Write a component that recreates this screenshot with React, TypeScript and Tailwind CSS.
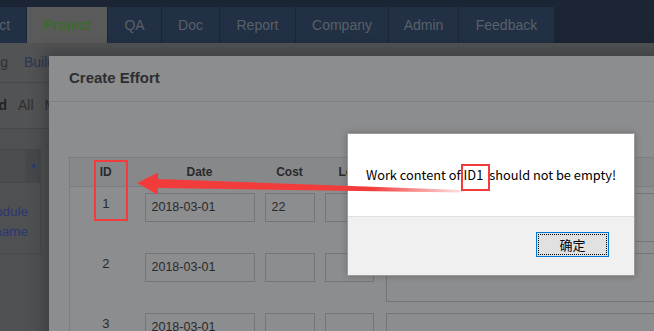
import React from 'react';

const tabs = [
  { name: 'Product', w: 'w-[80px] -ml-[54px]' },
  { name: 'Project', w: 'w-[80px]', active: true },
  { name: 'QA', w: 'w-[53px]' },
  { name: 'Doc', w: 'w-[57px]' },
  { name: 'Report', w: 'w-[75px]' },
  { name: 'Company', w: 'w-[92px]' },
  { name: 'Admin', w: 'w-[69px]' },
  { name: 'Feedback', w: 'w-[95px]' },
];

const rows = [
  { id: 1, date: '2018-03-01', cost: '22' },
  { id: 2, date: '2018-03-01', cost: '' },
  { id: 3, date: '2018-03-01', cost: '' },
];

// clips text from the left so only its tail shows
function Tail({ w, children, className }: { w: string; children: React.ReactNode; className?: string }) {
  return (
    <div className={`flex justify-end overflow-hidden ${w}`}>
      <span className={`shrink-0 whitespace-nowrap ${className ?? ''}`}>{children}</span>
    </div>
  );
}

export default function App() {
  return (
    <div className="relative h-[331px] w-[654px] overflow-hidden bg-[#4f5052] font-['Liberation_Sans',Arial,sans-serif]">
      {/* top nav */}
      <nav className="flex h-[43px] items-end bg-[#1c2533]">
        <div className="flex h-[36px] gap-px">
          {tabs.map(t => (
            <div
              key={t.name}
              className={`flex shrink-0 items-center justify-center text-[14px] ${t.w} ${
                t.active ? 'bg-[#5a5a5a] font-bold text-[#3d6a2e]' : 'bg-[#213044] text-[#596069]'
              }`}
            >
              {t.name}
            </div>
          ))}
        </div>
      </nav>

      {/* page under the dialogs */}
      <div className="bg-[#525355]">
        <div className="flex h-[40px] items-center gap-4 border-b border-[#47484a] text-[14px]">
          <Tail w="w-[8px]" className="text-[#2f3032]">Testing</Tail>
          <span className="text-[#2d3750]">Build</span>
        </div>
        <div className="flex h-[46px] items-center gap-[11px] border-b border-[#47484a] text-[14px]">
          <Tail w="w-[7px]" className="font-bold text-[#222324]">Assigned</Tail>
          <span className="text-[#2f3032]">All</span>
          <span className="text-[#2f3032]">More</span>
        </div>
      </div>
      <div className="pt-[20px]">
        <div className="w-[41px] border-r border-[#47484a]">
          <div className="flex h-[34px] border-y border-[#47484a] bg-[#4c4d4f]">
            <div className="flex-1" />
            <div className="flex w-[15px] items-center justify-center bg-[#47484b]">
              <svg width="4" height="6" viewBox="0 0 4 6">
                <path d="M4 0 L0 3 L4 6 Z" fill="#2b3878" />
              </svg>
            </div>
          </div>
          <div className="flex h-[71px] flex-col border-b border-[#47484a] bg-[#4f5052] pt-[19px] text-[13.5px] leading-[20px] text-[#2b3773]">
            <Tail w="w-[28px]">Module</Tail>
            <Tail w="w-[28px]">Username</Tail>
          </div>
        </div>
      </div>

      {/* Create Effort modal */}
      <div className="absolute left-[49px] top-[56px] h-[320px] w-[760px] bg-[#8c8d8f] shadow-[0_0_14px_6px_rgba(0,0,0,0.22)]">
        <div className="flex h-[46px] items-center border-b border-[#7f8082] px-5">
          <h2 className="text-[15px] font-bold text-[#2d2e2f]">Create Effort</h2>
        </div>
        <div className="pl-5 pt-[55px]">
          <table className="w-[710px] table-fixed border-collapse border-l border-t border-[#7c7d7f] text-[#2a2a2b]">
            <thead>
              <tr className="h-[29px] border-b border-[#7c7d7f] bg-[#87888a] text-[12px] font-bold">
                <th className="w-[70px] pl-[2px] text-center">ID</th>
                <th className="w-[120px] text-center">Date</th>
                <th className="w-[60px] text-center">Cost</th>
                <th className="w-[60px] text-center">Left</th>
                <th className="w-[400px] text-center">Work content</th>
              </tr>
            </thead>
            <tbody>
              {rows.map(r => (
                <tr key={r.id} className="h-[60px] align-top">
                  <td className="pl-[2px] pt-[9px] text-center text-[13px] leading-[15px]">{r.id}</td>
                  <td className="px-[5px] pt-[6px]">
                    <div className="flex h-[29px] items-center border border-[#747577] pl-[6px] text-[12.5px]">{r.date}</div>
                  </td>
                  <td className="px-[5px] pt-[6px]">
                    <div className="flex h-[29px] items-center border border-[#747577] pl-[6px] text-[12.5px]">{r.cost}</div>
                  </td>
                  <td className="pl-[5px] pr-[6px] pt-[6px]">
                    <div className="h-[29px] border border-[#747577]" />
                  </td>
                  <td className="pl-[6px] pt-[6px]">
                    <div className="h-[49px] border border-[#747577]" />
                  </td>
                </tr>
              ))}
            </tbody>
          </table>
        </div>
      </div>

      {/* browser alert */}
      <div className="absolute left-[347px] top-[133px] flex h-[143px] w-[288px] flex-col border border-[#9a9a9a] bg-white shadow-[0_0_6px_rgba(0,0,0,0.25)] font-['Noto_Sans_CJK_SC','Noto_Sans',sans-serif]">
        <div className="flex h-[82px] items-center justify-center whitespace-nowrap text-[12.8px] text-black">
          Work content of&nbsp;<span className="mr-[6px]">ID1</span>should not be empty!
        </div>
        <div className="flex flex-1 justify-end border-t border-[#dfdfdf] bg-[#f0f0f0] pr-[25px] pt-[15px]">
          <button className="h-[25px] w-[73px] border border-[#0078d7] bg-[#e1e1e1] p-px">
            <div className="flex h-full w-full items-center justify-center border border-dotted border-black text-[13px] text-black">
              确定
            </div>
          </button>
        </div>
      </div>

      {/* red annotations */}
      <svg className="pointer-events-none absolute left-0 top-0" width="654" height="331">
        <defs>
          <linearGradient id="fade" gradientUnits="userSpaceOnUse" x1="137" y1="0" x2="462" y2="0">
            <stop offset="0.72" stopColor="#f23c3c" stopOpacity="1" />
            <stop offset="1" stopColor="#f23c3c" stopOpacity="0.15" />
          </linearGradient>
        </defs>
        <polygon
          points="137,183 158,172.5 158,179 462,190 462,192.5 158,188 158,195"
          fill="url(#fade)"
        />
        <rect x="95" y="161" width="32" height="59" fill="none" stroke="#f23c3c" strokeWidth="2" />
        <rect x="462" y="165" width="27" height="25" fill="none" stroke="#f23c3c" strokeWidth="2" />
      </svg>
    </div>
  );
}
